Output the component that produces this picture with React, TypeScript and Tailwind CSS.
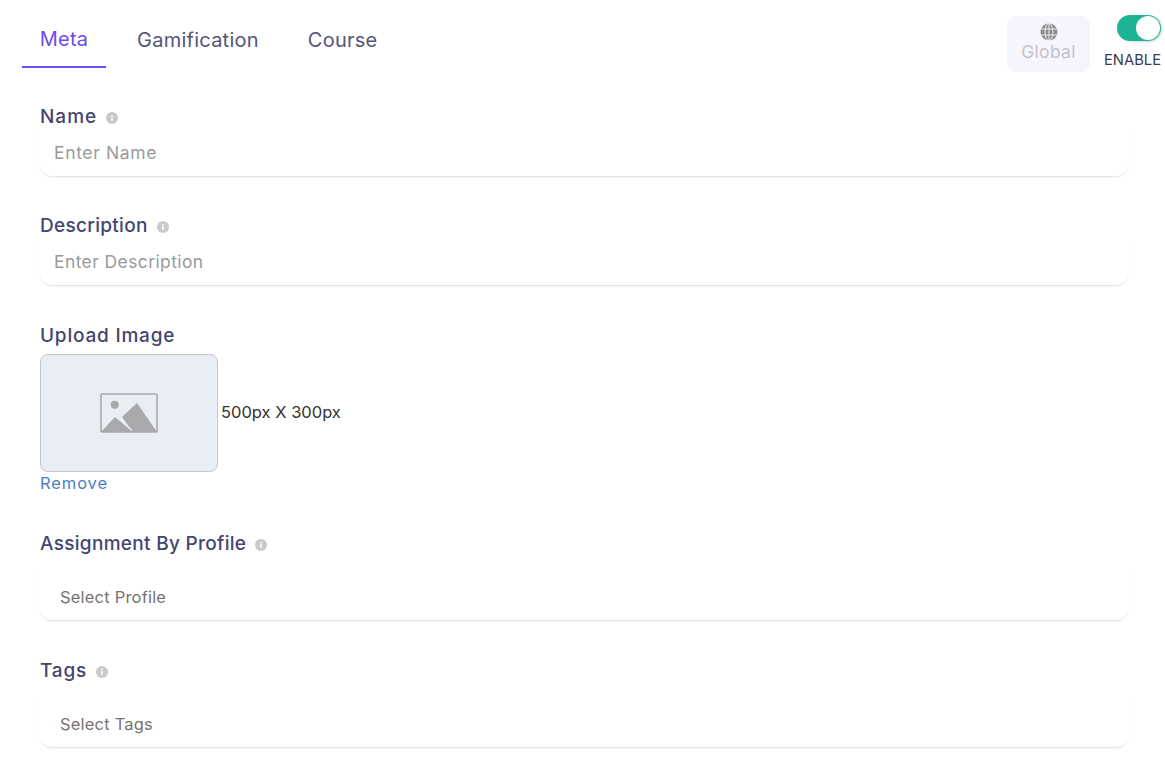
import React from 'react';

const font = { fontFamily: '"Inter", "Open Sans", sans-serif' };

function Info() {
    return (
        <svg width="12" height="12" viewBox="0 0 12 12" className="shrink-0">
            <circle cx="6" cy="6" r="6" fill="#c9c9c9" />
            <rect x="5.2" y="5.2" width="1.6" height="3.6" fill="#fff" />
            <rect x="5.2" y="3" width="1.6" height="1.5" fill="#fff" />
        </svg>
    );
}

function Label({ text, info = true, spacing = 'tracking-[0.3px]' }: { text: string; info?: boolean; spacing?: string }) {
    return (
        <div className="flex items-center gap-[9px] h-[27px]">
            <span className={`text-[19px] font-medium text-[#45456f] leading-[27px] ${spacing}`}>{text}</span>
            {info && <span className="mt-[2px]"><Info /></span>}
        </div>
    );
}

function TextField({ label, placeholder, spacing, inputSpacing }: { label: string; placeholder: string; spacing?: string; inputSpacing: string }) {
    return (
        <div>
            <Label text={label} spacing={spacing} />
            <div className="h-[47px] rounded-b-xl border-b border-[#e6e6e6] shadow-[0_1px_2px_rgba(0,0,0,0.04)] pl-[14px] pt-[1px] flex items-center">
                <input
                    placeholder={placeholder}
                    className={`w-full text-[17.5px] bg-transparent outline-none text-[#333] placeholder:text-[#9a9a9a] ${inputSpacing}`}
                />
            </div>
        </div>
    );
}

function SelectField({ label, placeholder, spacing }: { label: string; placeholder: string; spacing?: string }) {
    return (
        <div>
            <Label text={label} spacing={spacing} />
            <div className="mt-[17px] h-[47px] rounded-b-xl border-b border-[#e6e6e6] shadow-[0_1px_2px_rgba(0,0,0,0.04)] pl-[20px] flex items-center">
                <span className="text-[16.5px] tracking-[0.2px] text-[#77736f]">{placeholder}</span>
            </div>
        </div>
    );
}

export default function App() {
    return (
        <div className="w-[1165px] h-[768px] bg-white overflow-hidden" style={font}>
            <div className="flex justify-between h-[103px]">
                <div className="flex gap-[13px] pl-[22px] pt-[12px] h-[68px] tracking-[0.25px]">
                    <div className="h-[56px] w-[84px] flex items-center justify-center border-b-2 border-[#6a4cf0] text-[20px] text-[#6a4cf0]">Meta</div>
                    <div className="h-[56px] px-[18px] flex items-center text-[20px] text-[#55557a]">Gamification</div>
                    <div className="h-[56px] px-[18px] flex items-center text-[20px] text-[#55557a]">Course</div>
                </div>
                <div className="flex pr-[4px] pt-[15px]">
                    <div className="mt-[1px] w-[83px] h-[56px] rounded-lg bg-[#f6f5fe] flex flex-col items-center pt-[7px]">
                        <svg width="18" height="18" viewBox="0 0 18 18">
                            <circle cx="9" cy="9" r="8.5" fill="#8b8b8f" />
                            <ellipse cx="9" cy="9" rx="4" ry="8.5" fill="none" stroke="#f6f5fe" strokeWidth="0.9" />
                            <path d="M9 0.5V17.5M1 6H17M1 12H17" stroke="#f6f5fe" strokeWidth="0.9" />
                        </svg>
                        <span className="text-[17.5px] leading-[22px] tracking-[0.3px] text-[#c2c2cc]">Global</span>
                    </div>
                    <div className="ml-[15px] w-[56px] flex flex-col items-end">
                        <div className="w-[44px] h-[26px] rounded-full bg-[#1cb394] flex items-center justify-end pr-[1px] shadow-[1px_1px_2px_rgba(0,0,0,0.15)]">
                            <div className="w-[24px] h-[24px] rounded-full bg-white" />
                        </div>
                        <span className="mt-[7px] text-[14.75px] leading-[24px] text-[#3a3a55]">ENABLE</span>
                    </div>
                </div>
            </div>
            <div className="pl-[40px] pr-[37px]">
                <TextField label="Name" placeholder="Enter Name" spacing="tracking-[1px]" inputSpacing="tracking-[0.65px]" />
                <div className="mt-[35px]">
                    <TextField label="Description" placeholder="Enter Description" inputSpacing="tracking-[0.4px]" />
                </div>
                <div className="mt-[36px]">
                    <Label text="Upload Image" info={false} spacing="tracking-[0.8px]" />
                    <div className="mt-[5px] flex items-center">
                        <div className="w-[178px] h-[118px] rounded-lg border border-[#c4c8cc] bg-[#e9edf4] flex items-center justify-center">
                            <svg width="58" height="40" viewBox="0 0 58 40">
                                <rect x="1" y="1" width="56" height="38" rx="1" fill="none" stroke="#a9a9ab" strokeWidth="1.6" />
                                <circle cx="14.7" cy="11.7" r="4" fill="#a9a9ab" />
                                <path d="M22 24 L37 10 L57 39 H33 Z" fill="#a9a9ab" />
                                <path d="M1 39 L15 24 L33 39 Z" fill="#a9a9ab" />
                                <path d="M20 26 L32 37" stroke="#e9edf4" strokeWidth="1" />
                            </svg>
                        </div>
                        <span className="ml-[3px] text-[16.5px] text-[#333] -mt-[1px]">500px X 300px</span>
                    </div>
                    <div className="text-[16.5px] leading-[22px] tracking-[0.9px] text-[#4a7fc1]">Remove</div>
                </div>
                <div className="mt-[36px]">
                    <SelectField label="Assignment By Profile" placeholder="Select Profile" />
                </div>
                <div className="mt-[36px]">
                    <SelectField label="Tags" placeholder="Select Tags" spacing="tracking-[0.8px]" />
                </div>
            </div>
        </div>
    );
}
